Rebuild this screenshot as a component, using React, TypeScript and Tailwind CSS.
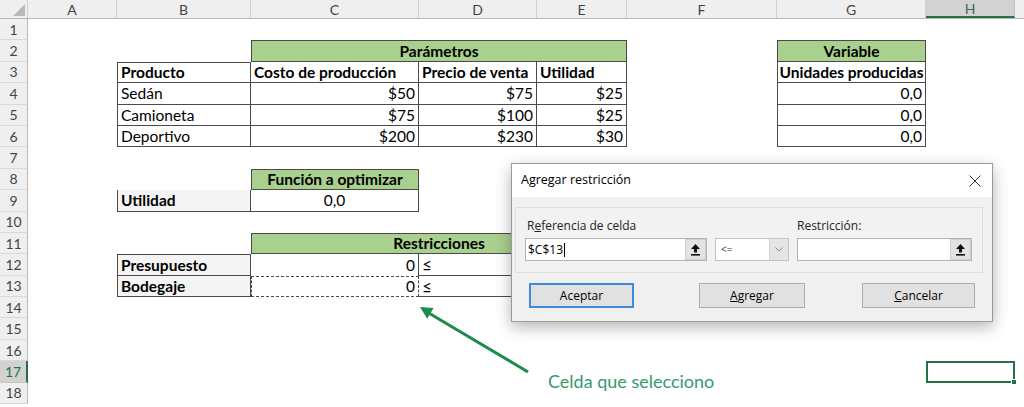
import React from "react";

// column widths (Excel columns A..H)
const A = "w-[89px]";
const B = "w-[134px]";
const C = "w-[168px]";
const D = "w-[118px]";
const E = "w-[90px]";
const F = "w-[150px]";
const G = "w-[149px]";
const H = "w-[89px]";
const CE = "w-[376px]";

const cell = "shrink-0 flex items-center pt-[1px] px-[3px] whitespace-nowrap text-[15.5px] leading-none text-black border-[#4a4a4a]";
const green = "bg-[#a9d08e] justify-center font-bold";

function RowHead({ n, active }: { n: number; active?: boolean }) {
  return (
    <div
      className={
        active
          ? "w-[28px] shrink-0 flex items-center justify-center bg-[#d2d2d2] border-r-2 border-r-[#217346] border-b border-b-[#c6c6c6] text-[14px] text-[#217346]"
          : "w-[28px] shrink-0 flex items-center justify-center bg-[#efefef] border-r border-r-[#b8b8b8] border-b border-b-[#d9d9d9] text-[14px] text-[#444]"
      }
    >
      {n}
    </div>
  );
}

function Row({ n, active, children }: { n: number; active?: boolean; children?: React.ReactNode }) {
  return (
    <div className="flex h-[21.4px]">
      <RowHead n={n} active={active} />
      {children}
    </div>
  );
}

function UpArrow() {
  return (
    <svg width="9" height="12" viewBox="0 0 9 12">
      <path d="M4.5 0 L9 5 H6 V8.5 H3 V5 H0 Z" fill="#111" />
      <rect x="0" y="10" width="9" height="1.6" fill="#111" />
    </svg>
  );
}

function RefInput({ width, value }: { width: string; value?: string }) {
  return (
    <div className={"h-[23px] flex bg-white border border-[#b4b4b4] " + width}>
      <div className="flex-1 flex items-center pl-[2px] text-[12px]">
        {value}
        {value && <span className="ml-[1px] w-px h-[14px] bg-black" />}
      </div>
      <div className="w-[21px] h-full flex items-center justify-center bg-[#e3e3e3] border border-[#cfcfcf]">
        <UpArrow />
      </div>
    </div>
  );
}

export default function App() {
  return (
    <div className="relative w-[1024px] h-[407px] overflow-hidden bg-white font-[family-name:Lato,sans-serif]">
      {/* column headers */}
      <div className="flex h-[19px] border-b border-[#b8b8b8] bg-[#efefef] text-[14px] text-[#444]">
        <div className="w-[28px] shrink-0 relative border-r border-[#d0d0d0]">
          <svg className="absolute right-[2px] bottom-[2px]" width="12" height="12" viewBox="0 0 12 12">
            <path d="M12 0 V12 H0 Z" fill="#b9b9b9" />
          </svg>
        </div>
        <div className={A + " shrink-0 flex items-center justify-center border-r border-[#d0d0d0]"}>A</div>
        <div className={B + " shrink-0 flex items-center justify-center border-r border-[#d0d0d0]"}>B</div>
        <div className={C + " shrink-0 flex items-center justify-center border-r border-[#d0d0d0]"}>C</div>
        <div className={D + " shrink-0 flex items-center justify-center border-r border-[#d0d0d0]"}>D</div>
        <div className={E + " shrink-0 flex items-center justify-center border-r border-[#d0d0d0]"}>E</div>
        <div className={F + " shrink-0 flex items-center justify-center border-r border-[#d0d0d0]"}>F</div>
        <div className={G + " shrink-0 flex items-center justify-center border-r border-[#d0d0d0]"}>G</div>
        <div className={H + " shrink-0 flex items-center justify-center bg-[#d2d2d2] border-b-2 border-b-[#217346] border-r border-r-[#c0c0c0] text-[#3f6b52]"}>H</div>
        <div className="flex-1" />
      </div>

      <Row n={1} />
      <Row n={2}>
        <div className={A + " shrink-0"} />
        <div className={B + " shrink-0"} />
        <div className={cell + " " + CE + " " + green + " border"}>Parámetros</div>
        <div className={F + " shrink-0"} />
        <div className={cell + " " + G + " " + green + " border"}>Variable</div>
      </Row>
      <Row n={3}>
        <div className={A + " shrink-0"} />
        <div className={cell + " " + B + " font-bold border"}>Producto</div>
        <div className={cell + " " + C + " font-bold border-r border-b"}>Costo de producción</div>
        <div className={cell + " " + D + " font-bold border-r border-b"}>Precio de venta</div>
        <div className={cell + " " + E + " font-bold border-r border-b"}>Utilidad</div>
        <div className={F + " shrink-0"} />
        <div className={cell + " " + G + " font-bold justify-center border-l border-r border-b"}>Unidades producidas</div>
      </Row>
      {[
        ["Sedán", "$50", "$75", "$25"],
        ["Camioneta", "$75", "$100", "$25"],
        ["Deportivo", "$200", "$230", "$30"],
      ].map((r, i) => (
        <Row key={r[0]} n={4 + i}>
          <div className={A + " shrink-0"} />
          <div className={cell + " " + B + " border-l border-r border-b"}>{r[0]}</div>
          <div className={cell + " " + C + " justify-end border-r border-b"}>{r[1]}</div>
          <div className={cell + " " + D + " justify-end border-r border-b"}>{r[2]}</div>
          <div className={cell + " " + E + " justify-end border-r border-b"}>{r[3]}</div>
          <div className={F + " shrink-0"} />
          <div className={cell + " " + G + " justify-end border-l border-r border-b"}>0,0</div>
        </Row>
      ))}
      <Row n={7} />
      <Row n={8}>
        <div className={A + " shrink-0"} />
        <div className={B + " shrink-0"} />
        <div className={cell + " " + C + " " + green + " border"}>Función a optimizar</div>
      </Row>
      <Row n={9}>
        <div className={A + " shrink-0"} />
        <div className={cell + " " + B + " font-bold bg-[#f4f4f4] border-l border-r border-b"}>Utilidad</div>
        <div className={cell + " " + C + " justify-center border-r border-b"}>0,0</div>
      </Row>
      <Row n={10} />
      <Row n={11}>
        <div className={A + " shrink-0"} />
        <div className={B + " shrink-0"} />
        <div className={cell + " " + CE + " " + green + " border"}>Restricciones</div>
      </Row>
      <Row n={12}>
        <div className={A + " shrink-0"} />
        <div className={cell + " " + B + " font-bold bg-[#f4f4f4] border"}>Presupuesto</div>
        <div className={cell + " " + C + " justify-end border-r"}>0</div>
        <div className={cell + " " + D + " border-r border-b px-[2px] text-[17px]"}>≤</div>
        <div className={cell + " " + E + " border-r border-b"} />
      </Row>
      <Row n={13}>
        <div className={A + " shrink-0"} />
        <div className={cell + " " + B + " font-bold bg-[#f4f4f4] border-l border-r border-b"}>Bodegaje</div>
        <div className={cell + " " + C + " justify-end border border-dashed border-[#2f5f45]"}>0</div>
        <div className={cell + " " + D + " border-r border-b px-[2px] text-[17px]"}>≤</div>
        <div className={cell + " " + E + " border-r border-b"} />
      </Row>
      <Row n={14} />
      <Row n={15} />
      <Row n={16} />
      <Row n={17} active>
        <div className="shrink-0 w-[898px]" />
        <div className={H + " shrink-0 relative border-2 border-[#217346]"}>
          <div className="absolute -right-[4px] -bottom-[4px] w-[6px] h-[6px] bg-[#217346] border border-white" />
        </div>
      </Row>
      <Row n={18} />

      {/* annotation */}
      <svg className="absolute left-[410px] top-[295px]" width="130" height="85" viewBox="0 0 130 85">
        <line x1="17" y1="17" x2="118" y2="77" stroke="#1f8a4d" strokeWidth="3" />
        <path d="M10 12 L17.2 23.8 L23.6 13 Z" fill="#1f8a4d" />
      </svg>
      <div className="absolute left-[548px] top-[370px] text-[18px] leading-[22px] text-[#36996b]">
        Celda que selecciono
      </div>

      {/* dialog */}
      <div className="absolute left-[511px] top-[163px] w-[482px] h-[159px] flex flex-col border border-[#9a9a9a] bg-[#f0f0f0] shadow-[0_5px_15px_rgba(0,0,0,0.3)] font-[family-name:'Open_Sans',sans-serif] text-[12px] text-black">
        <div className="h-[33px] shrink-0 bg-white flex items-center justify-between pl-[9px] pr-[11px]">
          <span className="text-[12.5px]">Agregar restricción</span>
          <svg width="12" height="12" viewBox="0 0 12 12">
            <path d="M0.5 0.5 L11.5 11.5 M11.5 0.5 L0.5 11.5" stroke="#333" strokeWidth="1" />
          </svg>
        </div>
        <div className="ml-[3px] mr-[9px] mt-[10px] h-[66px] border border-[#dedede] bg-[#f2f2f2] flex gap-[8px] pl-[9px] pt-[10px]">
          <div className="flex flex-col w-[182px]">
            <div className="h-[16px] pl-[2px] flex items-center text-[#222]">
              R<span className="underline">e</span>ferencia de celda
            </div>
            <div className="mt-[4px]">
              <RefInput width="w-[182px]" value="$C$13" />
            </div>
          </div>
          <div className="flex flex-col w-[74px] pt-[20px]">
            <div className="h-[23px] flex bg-white border border-[#c4c4c4]">
              <div className="flex-1 flex items-center pl-[5px] text-[10px] text-[#333]">&lt;=</div>
              <div className="w-[19px] flex items-center justify-center bg-[#e5e5e5] border-l border-[#d2d2d2]">
                <svg width="8" height="5" viewBox="0 0 8 5">
                  <path d="M0.5 0.5 L4 4 L7.5 0.5" stroke="#888" fill="none" />
                </svg>
              </div>
            </div>
          </div>
          <div className="flex flex-col w-[175px]">
            <div className="h-[16px] flex items-center text-[#222]">Restricción:</div>
            <div className="mt-[4px]">
              <RefInput width="w-[175px]" />
            </div>
          </div>
        </div>
        <div className="flex mt-[10px]">
          <div className="ml-[17px] w-[105px] h-[25px] flex items-center justify-center bg-[#e1e1e1] border-2 border-[#3d8bd9]">
            Aceptar
          </div>
          <div className="ml-[65px] w-[106px] h-[25px] flex items-center justify-center bg-[#e1e1e1] border border-[#adadad]">
            <span className="underline">A</span>gregar
          </div>
          <div className="ml-[57px] w-[113px] h-[25px] flex items-center justify-center bg-[#e1e1e1] border border-[#adadad]">
            <span className="underline">C</span>ancelar
          </div>
        </div>
      </div>
    </div>
  );
}
